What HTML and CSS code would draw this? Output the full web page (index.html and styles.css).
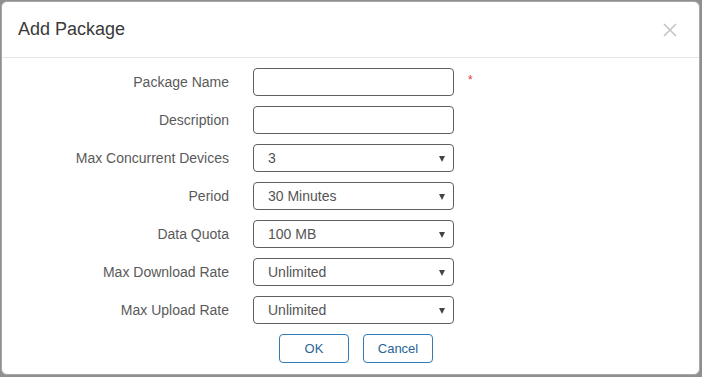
FILE: index.html
```html
<!DOCTYPE html>
<html lang="en">
<head>
    <meta charset="UTF-8">
    <meta name="viewport" content="width=device-width, initial-scale=1.0">
    <title>Add Package</title>
    <link rel="stylesheet" href="styles.css">
</head>
<body>
<div class="modal">
    <div class="modal-header">
        <h4 class="modal-title">Add Package</h4>
        <button class="close" type="button" aria-label="Close">
            <svg width="14" height="14" viewBox="0 0 14 14">
                <path d="M1 1 L13 13 M13 1 L1 13" stroke="#c4c4c4" stroke-width="1.6" fill="none"/>
            </svg>
        </button>
    </div>

    <form class="modal-body">
        <label class="form-label" for="pkg-name">Package Name</label>
        <input type="text" id="pkg-name" class="form-control">
        <span class="required">*</span>

        <label class="form-label" for="pkg-desc">Description</label>
        <input type="text" id="pkg-desc" class="form-control">
        <span></span>

        <label class="form-label" for="pkg-devices">Max Concurrent Devices</label>
        <div class="select-wrap">
            <select id="pkg-devices" class="form-control">
                <option>3</option>
            </select>
        </div>
        <span></span>

        <label class="form-label" for="pkg-period">Period</label>
        <div class="select-wrap">
            <select id="pkg-period" class="form-control">
                <option>30 Minutes</option>
            </select>
        </div>
        <span></span>

        <label class="form-label" for="pkg-quota">Data Quota</label>
        <div class="select-wrap">
            <select id="pkg-quota" class="form-control">
                <option>100 MB</option>
            </select>
        </div>
        <span></span>

        <label class="form-label" for="pkg-down">Max Download Rate</label>
        <div class="select-wrap">
            <select id="pkg-down" class="form-control">
                <option>Unlimited</option>
            </select>
        </div>
        <span></span>

        <label class="form-label" for="pkg-up">Max Upload Rate</label>
        <div class="select-wrap">
            <select id="pkg-up" class="form-control">
                <option>Unlimited</option>
            </select>
        </div>
        <span></span>

        <div class="actions">
            <button type="button" class="btn">OK</button>
            <button type="button" class="btn">Cancel</button>
        </div>
    </form>
</div>
</body>
</html>
```

FILE: styles.css
```css
* {
    box-sizing: border-box;
}

body {
    margin: 0;
    background: #8f8f8f;
    font-family: "Liberation Sans", Arial, sans-serif;
    font-size: 14px;
    color: #333;
}

.modal {
    width: 699px;
    height: 374px;
    margin: 1px 0 0 1px;
    background: #fff;
    border: 1px solid #a8a8a8;
    border-radius: 6px;
}

.modal-header {
    display: flex;
    align-items: center;
    justify-content: space-between;
    height: 56px;
    padding: 0 22px 0 15px;
    border-bottom: 1px solid #e5e5e5;
}

.modal-title {
    margin: 0 0 0 1px;
    font-size: 18px;
    font-weight: normal;
    color: #3a3a3a;
}

.close {
    display: flex;
    padding: 0;
    margin-top: 1px;
    background: none;
    border: none;
    cursor: pointer;
}

.modal-body {
    display: grid;
    grid-template-columns: 227px 201px 30px;
    column-gap: 24px;
    row-gap: 10px;
    align-items: center;
    padding-top: 10px;
}

.form-label {
    text-align: right;
    color: #5a5a5a;
}

.form-control {
    width: 201px;
    height: 28px;
    padding: 0 14px;
    font-family: inherit;
    font-size: 14px;
    color: #555;
    background: #fff;
    border: 1px solid #606060;
    border-radius: 4px;
    outline: none;
}

select.form-control {
    appearance: none;
    -webkit-appearance: none;
}

.select-wrap {
    position: relative;
    height: 28px;
}

.select-wrap::after {
    content: "";
    position: absolute;
    right: 9px;
    top: 12px;
    border-left: 3px solid transparent;
    border-right: 3px solid transparent;
    border-top: 6px solid #444;
    pointer-events: none;
}

.required {
    margin-left: -10px;
    margin-top: -4px;
    color: #e83a3a;
    font-size: 12px;
}

.actions {
    grid-column: 2;
    display: flex;
    gap: 14px;
    margin-left: 26px;
}

.btn {
    width: 70px;
    height: 29px;
    font-family: inherit;
    font-size: 13px;
    color: #2a6496;
    background: #fff;
    border: 1px solid #2f7bb8;
    border-radius: 4px;
    cursor: pointer;
}
```
